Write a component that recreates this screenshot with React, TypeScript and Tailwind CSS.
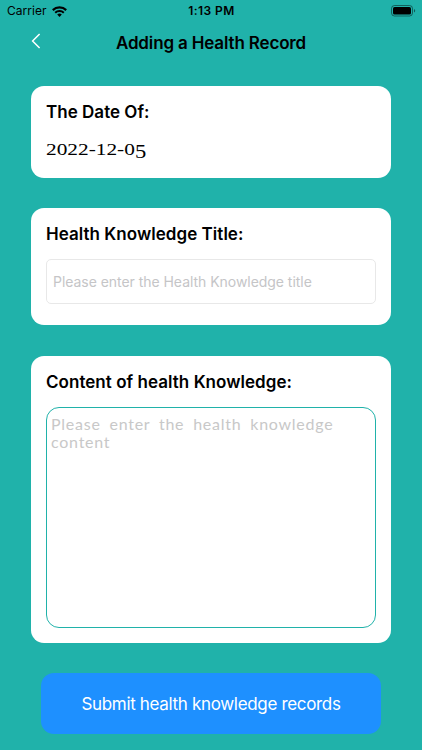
import React, { useState } from 'react';

function StatusBar() {
  return (
    <div className="grid h-[22px] grid-cols-3 items-center pl-[7px] pr-[6px] text-black">
      <div className="flex items-center gap-[5px]">
        <span className="text-[12px] leading-none tracking-[0.05px]">Carrier</span>
        <svg width="15" height="11" viewBox="0 0 15 11" fill="none">
          <path d="M.8 4.1a9.6 9.6 0 0 1 13.4 0" stroke="black" strokeWidth="2.2" />
          <path d="M3.2 6.7a6.2 6.2 0 0 1 8.6 0" stroke="black" strokeWidth="2" />
          <path d="M5.2 8.6a3.5 3.5 0 0 1 4.6 0L7.5 11Z" fill="black" />
        </svg>
      </div>
      <span className="text-center text-[12px] font-semibold leading-none tracking-[0.4px]">1:13 PM</span>
      <svg className="justify-self-end" width="25" height="12" viewBox="0 0 25 12" fill="none">
        <rect x="0.5" y="0.5" width="21" height="10.5" rx="3" stroke="black" strokeOpacity="0.45" />
        <rect x="2" y="2" width="18" height="7.5" rx="1.6" fill="black" />
        <path d="M23 4v3.6c1.6-.6 1.6-3 0-3.6Z" fill="black" fillOpacity="0.5" />
      </svg>
    </div>
  );
}

function Header() {
  return (
    <header className="grid h-[42px] grid-cols-[60px_1fr_60px] items-center">
      <button aria-label="Back" className="flex h-full items-center pl-[31px] pb-[4px]">
        <svg width="10" height="16" viewBox="0 0 10 16" fill="none">
          <path d="M8.6 1 1.6 8l7 7" stroke="white" strokeWidth="1.5" />
        </svg>
      </button>
      <h1 className="text-center text-[17px] font-semibold leading-none tracking-[-0.15px]">Adding a Health Record</h1>
    </header>
  );
}

export default function App() {
  const [title, setTitle] = useState('');
  const [content, setContent] = useState('');

  return (
    <div className="flex h-[750px] w-[422px] flex-col overflow-hidden bg-[#20b2aa] font-['Inter',sans-serif]">
      <StatusBar />
      <Header />

      <main className="flex flex-col px-[31px] pt-[22px]">
        {/* Date */}
        <section className="h-[91.5px] rounded-[13px] bg-white px-[15px] pt-[16px]">
          <h2 className="text-[17px] font-semibold leading-5 tracking-[0.02px]">The Date Of:</h2>
          {/* stretched, with the last digit dropped below the baseline like old-style figures */}
          <p className="mt-[18px] w-max origin-left scale-x-[1.255] font-['Liberation_Serif',serif] text-[17px] leading-5">
            2022-12-0<span className="relative top-[3px] text-[18px] leading-none">5</span>
          </p>
        </section>

        {/* Title */}
        <section className="mt-[30.5px] h-[117px] rounded-[13px] bg-white px-[15px] pt-[16px]">
          <h2 className="text-[17px] font-semibold leading-5 tracking-[0.04px]">Health Knowledge Title:</h2>
          <input
            className="mt-[15px] block h-[45px] w-full rounded-[5px] border border-[#e8e8e8] px-[6px] text-[14px] tracking-[-0.04px] outline-none placeholder:text-[#c5c5c7]"
            placeholder="Please enter the Health Knowledge title"
            value={title}
            onChange={(e) => setTitle(e.target.value)}
          />
        </section>

        {/* Content */}
        <section className="mt-[30.5px] h-[287px] rounded-[13px] bg-white px-[15px] pt-[16px]">
          <h2 className="text-[17px] font-semibold leading-5 tracking-[0.04px]">Content of health Knowledge:</h2>
          <textarea
            className="mt-[15px] block h-[221px] w-full resize-none rounded-[13px] border border-[#20b2aa] px-[4px] py-[7px] font-['Lato',sans-serif] text-[16px] leading-[18px] tracking-[0.75px] [word-spacing:4px] outline-none placeholder:text-[#c8c8c8]"
            placeholder="Please enter the health knowledge content"
            value={content}
            onChange={(e) => setContent(e.target.value)}
          />
        </section>

        <button className="mx-[10px] mt-[30.5px] h-[61px] rounded-[13px] bg-[#1e90ff] pt-[3px] text-[17px] tracking-[-0.33px] text-white">
          Submit health knowledge records
        </button>
      </main>
    </div>
  );
}
